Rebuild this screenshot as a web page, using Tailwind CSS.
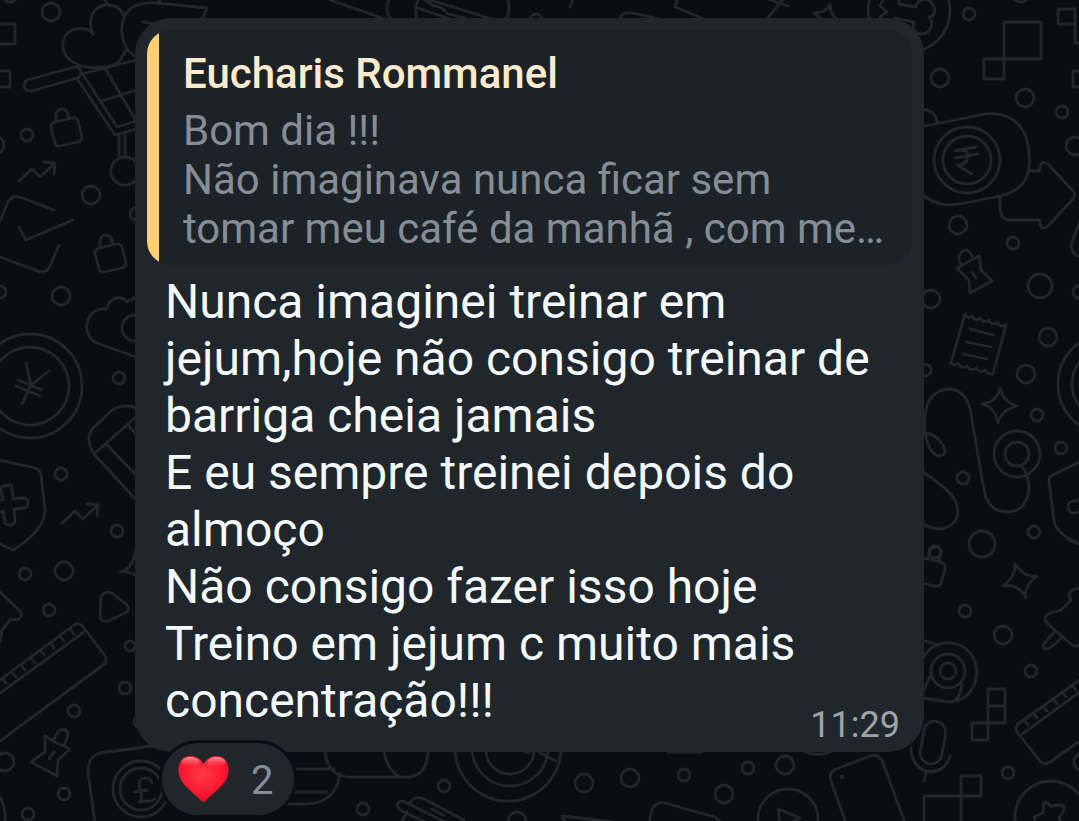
<!DOCTYPE html>
<html lang="pt-BR">
<head>
    <meta charset="UTF-8">
    <meta name="viewport" content="width=device-width, initial-scale=1.0">
    <title>Chat</title>
    <script src="https://cdn.jsdelivr.net/npm/@tailwindcss/browser@4"></script>
</head>
<body class="bg-[#070e14] font-['Roboto',sans-serif]">
    <main class="relative min-h-screen overflow-hidden">
        <!-- Wallpaper -->
        <svg class="absolute inset-0 w-full h-full" viewBox="0 0 1079 821" preserveAspectRatio="xMidYMin slice" fill="none" stroke="#20282b" stroke-width="2.8" stroke-linecap="round" stroke-linejoin="round" aria-hidden="true">
            <!-- Small dots -->
            <g>
                <circle cx="27" cy="135" r="6"/><circle cx="136" cy="214" r="6"/><circle cx="0" cy="292" r="6"/><circle cx="119" cy="378" r="6"/>
                <circle cx="61" cy="474" r="6"/><circle cx="117" cy="531" r="6"/><circle cx="25" cy="574" r="6"/><circle cx="49" cy="610" r="6"/>
                <circle cx="130" cy="646" r="5"/><circle cx="125" cy="688" r="6"/><circle cx="74" cy="711" r="6"/><circle cx="64" cy="794" r="6"/>
                <circle cx="28" cy="814" r="6"/><circle cx="140" cy="722" r="6"/><circle cx="969" cy="14" r="6"/><circle cx="1062" cy="112" r="6"/>
                <circle cx="1013" cy="243" r="6"/><circle cx="1079" cy="292" r="6"/><circle cx="925" cy="370" r="6"/><circle cx="1037" cy="415" r="6"/>
                <circle cx="1061" cy="448" r="6"/><circle cx="963" cy="478" r="6"/><circle cx="1034" cy="532" r="6"/><circle cx="935" cy="552" r="6"/>
                <circle cx="965" cy="611" r="6"/><circle cx="1031" cy="671" r="6"/><circle cx="1008" cy="773" r="6"/><circle cx="444" cy="786" r="6"/>
                <circle cx="363" cy="809" r="6"/><circle cx="684" cy="775" r="6"/><circle cx="748" cy="768" r="6"/><circle cx="536" cy="19" r="5"/>
            </g>
            <!-- Large dots -->
            <g>
                <circle cx="51" cy="12" r="9"/><circle cx="10" cy="-6" r="8"/><circle cx="91" cy="195" r="9"/><circle cx="-5" cy="145" r="9"/>
                <circle cx="61" cy="296" r="9"/><circle cx="64" cy="571" r="9"/><circle cx="5" cy="762" r="9"/><circle cx="940" cy="78" r="9"/>
                <circle cx="1025" cy="98" r="9"/><circle cx="1075" cy="146" r="9"/><circle cx="958" cy="225" r="9"/><circle cx="1021" cy="-6" r="8"/>
                <circle cx="1040" cy="286" r="12"/><circle cx="931" cy="299" r="9"/><circle cx="1048" cy="337" r="9"/><circle cx="1026" cy="374" r="9"/>
                <circle cx="982" cy="544" r="13"/><circle cx="1003" cy="635" r="9"/><circle cx="1083" cy="762" r="9"/><circle cx="517" cy="821" r="9"/>
                <circle cx="584" cy="783" r="9"/><circle cx="630" cy="778" r="9"/><circle cx="724" cy="794" r="9"/><circle cx="785" cy="765" r="9"/>
            </g>
            <!-- Left column -->
            <path d="M-6 24H15V44H-6M-6 71H10V87H-6"/>
            <path d="M93 34C88 25 62 25 63 47C64 58 75 66 88 67C103 69 113 66 119 62L126 50M93 34C87 21 92 5 108 5C116 5 122 10 124 16M108 5L104 -1"/>
            <path d="M137 57C119 50 115 15 135 6C143 2 150 3 157 3L207 8L203 18M143 22L156 24M158 3L162 -2"/>
            <path d="M27 80L75 67Q80 67 81 72Q81 76 77 78L32 91Q25 92 24 86Q24 82 27 80ZM82 74L140 59M78 80L115 135L140 128M84 76L117 127L140 120M105 68L136 121M101 101L140 89M119 134V156M125 132V156"/>
            <circle cx="125" cy="171" r="14"/>
            <g id="lock"><path d="M55 122L72 118Q77 117 78 121L82 137Q82 141 78 142L60 146Q56 147 55 143L51 128Q50 124 55 122ZM56 121V114A6 6 0 0 1 67 112L69 118"/></g>
            <use href="#lock" x="44" y="126"/>
            <g id="trend"><path d="M19 181L32 169L40 177L55 163M44 162L55 163L54 174"/></g>
            <use href="#trend" x="43" y="342"/>
            <path d="M0 221L8 202Q12 195 20 197L54 210M19 227L26 240L73 220M59 245L50 266Q46 274 38 271L0 257"/>
            <circle cx="30" cy="386" r="52"/><circle cx="30" cy="386" r="39"/>
            <path d="M26 363L31 385L49 371M31 385L22 404M18 380L42 390M16 386L40 396"/>
            <path d="M136 297L127 302C120 294 110 298 106 309C85 307 80 335 97 343L136 357"/><circle cx="135" cy="328" r="13"/>
            <path d="M136 408C125 403 112 408 107 415L94 427Q84 438 94 454L136 500M94 454L136 417M107 445L136 475M128 425L136 434"/>
            <path d="M0 460L35 468Q40 470 41 475L45 510Q45 530 13 550L0 544"/>
            <path d="M0 488L3 486L9 485Q12 485 12 488L13 499L23 498Q27 498 28 502Q28 508 25 508L14 509L15 520Q15 525 10 525Q5 525 5 522L3 511L-2 512M0 500L3 500L1 489"/>
            <path d="M136 548Q133 570 120 572Q130 570 138 577"/>
            <path d="M101 597Q105 589 113 594L127 605Q131 610 125 613L108 621Q100 623 100 614Z"/>
            <path d="M0 592L20 611Q24 617 17 620L11 619L2 630L0 642"/>
            <path d="M0 680L74 625Q79 621 84 628L105 656Q108 662 103 665L0 741M0 693L84 632M2 679l4 4M12 672l4 5M21 665l4 5M31 658l4 5M40 650l4 5M50 643l4 5M60 636l4 5M70 629l4 5"/>
            <path d="M45 736L53 741L70 749L58 760L57 776L31 762L45 752ZM54 740C57 726 71 726 67 738L64 746M54 752L49 759"/>
            <path d="M160 745L100 753Q88 756 88 772L95 823M0 797Q6 808 5 821"/>
            <circle cx="141" cy="789" r="28"/><circle cx="141" cy="789" r="21"/>
            <path d="M152 783C150 776 139 776 139 784C139 790 145 797 139 802C145 799 149 804 155 799M134 792L147 790"/>
            <!-- Top edge -->
            <path d="M330 0L385 19M389 0Q384 10 391 19M418 0Q414 9 417 19M430 0L492 19M418 8L450 19M425 0L434 6Q442 6 448 14L466 18M508 0Q510 10 507 19M570 7L573 -1M677 0L675 7L702 18M620 18Q622 12 632 13L660 19M767 19L783 -1M768 -1L788 6M830 4Q826 13 814 13L822 20M830 4Q830 13 837 20"/>
            <!-- Right column -->
            <circle cx="909" cy="11" r="41"/>
            <path d="M899 0V4L916 7C917 -2 930 -3 933 5C937 12 933 17 929 17C935 24 930 34 921 34C914 34 912 26 914 22L894 18M883 0L880 6L887 12L880 17"/>
            <path d="M1004 22H1041V59H1004ZM984 59H1004V79H984ZM1058 9H1075V24H1058ZM1075 24V43H1082M1082 71H1073V87H1082"/>
            <path d="M920 127L980 115C1008 109 1025 125 1028 145C1034 178 1022 191 1000 196L960 204Q935 208 920 192M920 109Q936 110 937 122"/>
            <circle cx="967" cy="160" r="33"/><circle cx="967" cy="160" r="24"/>
            <path d="M955 151L976 147M955 158L978 154M961 150Q970 151 968 158Q966 165 957 165L972 174"/>
            <path d="M1029 171H1040V166Q1042 160 1048 164L1073 191Q1076 195 1073 199L1048 226Q1042 231 1040 224V220H1010Q1000 219 1000 208V197M1081 219L1072 242Q1069 254 1081 257"/>
            <path d="M957 268L979 256L981 270L992 281L970 293L969 280ZM961 265C955 253 966 245 971 254L973 259M972 272L976 278"/>
            <path d="M965 314L951 363M1006 325L993 374M965 314Q967 320 972 316Q975 322 980 318Q984 324 989 320Q992 327 997 322Q1000 328 1006 325M951 363Q954 367 958 363Q962 370 967 366Q971 372 976 368Q980 374 985 370Q989 375 993 374M970 329L994 335M966 342L991 347M963 354L987 359"/>
            <path d="M1000 388Q1003 402 1017 406Q1001 410 998 423Q995 407 982 404Q997 402 1000 388Z"/>
            <circle cx="1109" cy="384" r="51"/><circle cx="1109" cy="384" r="37"/>
            <path d="M925 432C922 397 937 389 950 389C963 390 970 402 972 420L984 490C987 507 997 512 1008 512C1025 511 1031 496 1028 480Q1026 470 1021 466"/>
            <circle cx="1017" cy="454" r="23"/><circle cx="1017" cy="454" r="12"/>
            <path d="M925 433C936 434 943 443 945 451Q945 456 938 456Q929 453 925 433M922 471L945 488C965 506 959 524 945 528Q933 531 922 523"/>
            <path d="M1081 461L1051 476Q1049 477 1049 482L1054 520Q1056 535 1081 544M1081 500L1073 501Q1068 502 1068 507Q1069 513 1073 513L1081 512M1068 540L1081 545"/>
            <path d="M922 558L941 562Q946 564 945 569L941 583Q940 587 934 586L922 583M928 557C930 543 943 545 941 554L939 561"/>
            <path d="M1015 564Q1024 578 1037 576Q1023 587 1026 598Q1018 583 1003 586Q1016 577 1015 564Z"/>
            <path d="M1081 589Q1070 587 1069 596L1071 600L1061 610L1050 613Q1042 617 1047 623L1072 645Q1076 648 1081 643M1055 631L1043 645Q1043 651 1050 648L1063 637"/>
            <path d="M922 659Q932 642 950 643C985 645 986 699 950 702L922 698M932 672L922 694M962 684Q960 700 951 702M922 640L938 645"/>
            <circle cx="948" cy="671" r="8"/><circle cx="948" cy="671" r="17"/>
            <path d="M988 689H1005V723H988ZM988 706H1005M972 723H988V740H972Z"/>
            <rect x="922" y="721" width="22" height="43" rx="11" transform="rotate(10 933 742)"/>
            <path d="M911 748C912 778 945 778 950 756M926 773L924 781"/>
            <path d="M961 776H981V796H961ZM961 796H924V823M961 796V823"/>
            <path d="M1081 679L1018 724Q1014 728 1017 732L1040 761Q1044 766 1050 762L1081 740M1021 735L1081 691M1024 720l4 5M1033 713l4 5M1043 706l4 5M1053 699l4 5M1062 692l4 5M1072 685l4 5"/>
            <circle cx="1051" cy="817" r="36"/>
            <path d="M1036 823L1034 817L1043 813L1044 803Q1047 801 1050 806L1062 805Q1066 806 1063 812L1059 818L1062 823"/>
            <!-- Bottom edge -->
            <path d="M325 750Q327 777 351 777H410Q428 774 428 750M384 750Q386 769 400 777M290 769H334M290 792H327M285 804H308Q336 802 340 774"/>
            <circle cx="508" cy="748" r="53"/><circle cx="510" cy="748" r="38"/><circle cx="510" cy="750" r="24"/>
            <path d="M521 750L528 753M540 753L556 761M398 803Q400 800 405 802L445 822M398 803Q395 807 404 812L425 822M410 803Q415 795 424 799L464 820M407 812L401 823M432 809L443 815"/>
            <path d="M562 816L614 822M562 816L566 822M649 823L652 810Q656 801 665 803L715 817L722 823M668 752H702M805 752Q817 757 830 752"/>
            <circle cx="788" cy="819" r="30"/>
            <path d="M780 823L778 809L800 818L790 823M846 823L831 781Q828 773 836 769L870 756Q879 753 883 763L905 823"/>
            <circle cx="842" cy="777" r="1"/>
        </svg>

        <div class="relative pt-[18px] pl-[135px] pr-[155px]">
            <!-- Message bubble -->
            <article class="rounded-[36px] bg-[#1f272d] px-3 pt-3 pb-[6px]">
                <!-- Quoted message -->
                <blockquote class="flex overflow-hidden rounded-[24px] bg-[#1b2329]">
                    <div class="w-3 shrink-0 bg-[#ffd06b]"></div>
                    <div class="min-w-0 px-6 pt-[19px] pb-3 text-[42px] leading-[49px]">
                        <div class="pb-2 font-medium text-[#ffebcb]">Eucharis Rommanel</div>
                        <p class="whitespace-nowrap text-[#868d94]">Bom dia !!!<br>Não imaginava nunca ficar sem<br>tomar meu café da manhã , com me…</p>
                    </div>
                </blockquote>

                <!-- Message text -->
                <p class="mt-2 whitespace-nowrap px-[18px] text-[48px] leading-[57px] text-[#f5f9fc]">
                    Nunca imaginei treinar em<br>
                    jejum,hoje não consigo treinar de<br>
                    barriga cheia jamais<br>
                    E eu sempre treinei depois do<br>
                    almoço<br>
                    Não consigo fazer isso hoje<br>
                    Treino em jejum c muito mais<br>
                    concentração!!!
                </p>
                <div class="-mt-[25px] flex justify-end px-3">
                    <time class="text-[36px] leading-[42px] text-[#9da3a6]">11:29</time>
                </div>
            </article>

            <!-- Reactions -->
            <button type="button" class="-mt-3 ml-6 flex h-[78px] items-center gap-[21px] rounded-full border-[3px] border-[#070e14] bg-[#1f272d] pl-[15px] pr-[21px]">
                <svg class="h-[48px] w-[53px]" viewBox="0 0 52 48" aria-hidden="true">
                    <defs>
                        <radialGradient id="heart" cx=".48" cy=".4" r=".62">
                            <stop offset="0" stop-color="#ff3b43"/>
                            <stop offset=".7" stop-color="#fb1630"/>
                            <stop offset="1" stop-color="#df0d25"/>
                        </radialGradient>
                        <linearGradient id="shine" x1="0" y1="0" x2="0" y2="1">
                            <stop offset="0" stop-color="#ff9a98"/>
                            <stop offset="1" stop-color="#ff4b50" stop-opacity="0"/>
                        </linearGradient>
                    </defs>
                    <path fill="url(#heart)" d="M26 9C22 2 17 1 13 1C5 1 1 7 1 15C1 29 15 36 24 46Q26 48 28 46C37 36 51 29 51 15C51 7 47 1 39 1C35 1 30 2 26 9Z"/>
                    <ellipse cx="13" cy="7" rx="9" ry="5" fill="url(#shine)"/>
                    <ellipse cx="39" cy="7" rx="9" ry="5" fill="url(#shine)"/>
                </svg>
                <span class="pt-1 text-[40px] leading-[48px] text-[#868d94]">2</span>
            </button>
        </div>
    </main>
</body>
</html>
